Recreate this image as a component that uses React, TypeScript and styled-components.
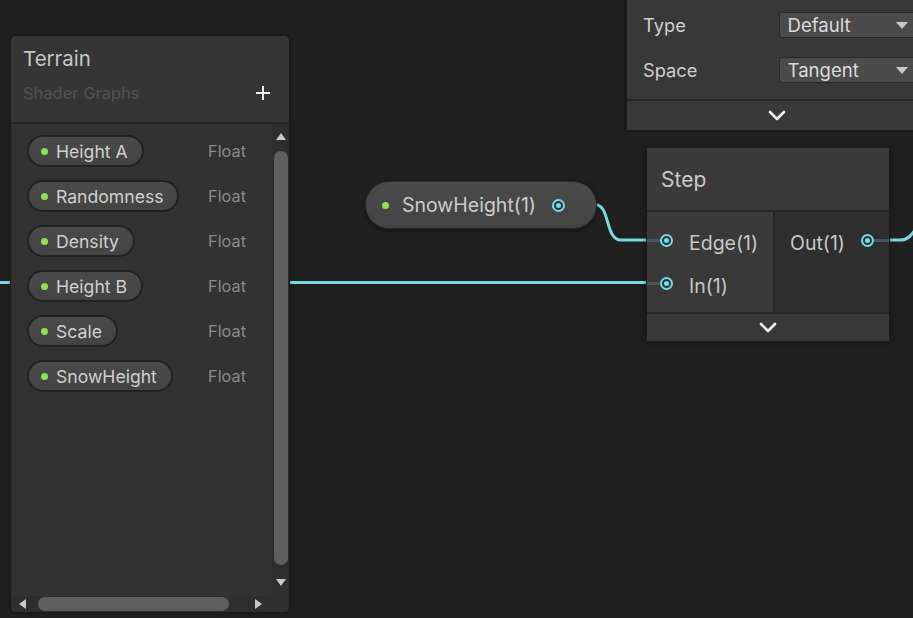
import { FC } from "react";
import styled, { createGlobalStyle } from "styled-components";

const CYAN = "#79d9e2";

const GlobalStyle = createGlobalStyle`
  html, body {
    margin: 0;
    padding: 0;
    background: #202020;
  }
  body {
    font-family: Inter, "Noto Sans", sans-serif;
    -webkit-font-smoothing: antialiased;
  }
`;

const properties = [
  "Height A",
  "Randomness",
  "Density",
  "Height B",
  "Scale",
  "SnowHeight",
];

const App: FC = () => {
  return (
    <>
      <GlobalStyle />
      <Canvas>
        <Edges />
        <NormalNode />
        <PropertyNode />
        <StepNode />
        <Blackboard />
      </Canvas>
    </>
  );
};

const Canvas = styled.div`
  position: relative;
  width: 913px;
  height: 618px;
  overflow: hidden;
  background: #202020;
`;

const Edges: FC = () => {
  return (
    <EdgeLayer width={913} height={618} viewBox="0 0 913 618">
      <path d="M0 282.5 L647 282.5" stroke={CYAN} strokeWidth={3} fill="none" />
      <path
        d="M596 205 C610 205, 605 240, 621 240 L647 240"
        stroke={CYAN}
        strokeWidth={3}
        fill="none"
      />
      <path
        d="M889 240 L900 240 C908 240, 911 236, 918 226"
        stroke={CYAN}
        strokeWidth={3}
        fill="none"
      />
    </EdgeLayer>
  );
};

const EdgeLayer = styled.svg`
  position: absolute;
  left: 0;
  top: 0;
  pointer-events: none;
`;

/* ---------- blackboard ---------- */

const Blackboard: FC = () => {
  return (
    <BlackboardWindow>
      <BlackboardHeader>
        <BlackboardTitle>Terrain</BlackboardTitle>
        <SubtitleRow>
          <BlackboardSubtitle>Shader Graphs</BlackboardSubtitle>
          <svg width="16" height="16" viewBox="0 0 16 16">
            <path d="M8 1 V15 M1 8 H15" stroke="#ececec" strokeWidth="2" />
          </svg>
        </SubtitleRow>
      </BlackboardHeader>
      <BlackboardBody>
        <PropertyList>
          {properties.map((name) => (
            <PropertyRow key={name}>
              <PropertyPill>
                <Dot />
                {name}
              </PropertyPill>
              <PropertyType>Float</PropertyType>
            </PropertyRow>
          ))}
        </PropertyList>
        <VScroll>
          <Arrow dir="up" />
          <VThumb />
          <Arrow dir="down" />
        </VScroll>
        <HScroll>
          <Arrow dir="left" />
          <HThumb />
          <Arrow dir="right" />
        </HScroll>
        <Corner />
      </BlackboardBody>
    </BlackboardWindow>
  );
};

const BlackboardWindow = styled.div`
  position: absolute;
  left: 10px;
  top: 35px;
  width: 280px;
  height: 578px;
  display: flex;
  flex-direction: column;
  box-sizing: border-box;
  border: 1px solid #1b1b1b;
  border-radius: 6px;
  background: #323232;
  overflow: hidden;
  box-shadow: 0 0 3px rgba(0, 0, 0, 0.4);
`;

const BlackboardHeader = styled.div`
  height: 88px;
  box-sizing: border-box;
  padding: 10px 14px 0 12px;
  background: #353535;
  border-bottom: 2px solid #262626;
`;

const BlackboardTitle = styled.div`
  font-size: 20.5px;
  color: #c6c6c6;
  line-height: 26px;
`;

const SubtitleRow = styled.div`
  display: flex;
  align-items: center;
  justify-content: space-between;
  margin-top: 11px;
  svg {
    margin-right: 4px;
  }
`;

const BlackboardSubtitle = styled.div`
  font-size: 16.5px;
  line-height: 20px;
  color: #525252;
`;

const BlackboardBody = styled.div`
  flex: 1;
  display: grid;
  grid-template-columns: 1fr 17px;
  grid-template-rows: 1fr 16px;
  min-height: 0;
`;

const PropertyList = styled.div`
  display: flex;
  flex-direction: column;
  gap: 13px;
  padding: 11px 26px 0 16px;
  background: #323232;
`;

const PropertyRow = styled.div`
  display: flex;
  align-items: center;
  justify-content: space-between;
  height: 32px;
`;

const PropertyPill = styled.div`
  display: flex;
  align-items: center;
  gap: 8px;
  height: 32px;
  box-sizing: border-box;
  padding: 0 14px 0 12px;
  border: 2px solid #222222;
  border-radius: 16px;
  background: linear-gradient(#4a4a4a, #434343);
  color: #d0d0d0;
  font-size: 17.6px;
  white-space: nowrap;
`;

const Dot = styled.span`
  width: 7px;
  height: 7px;
  border-radius: 50%;
  background: #8ee055;
  flex: none;
`;

const PropertyType = styled.div`
  font-size: 16.3px;
  color: #8a8a8a;
`;

const VScroll = styled.div`
  display: flex;
  flex-direction: column;
  align-items: center;
  padding: 9px 0 10px;
  background: #2e2e2e;
`;

const VThumb = styled.div`
  flex: 1;
  width: 14px;
  margin: 11px 0 14px;
  border-radius: 7px;
  background: #5e5e5e;
`;

const HScroll = styled.div`
  display: flex;
  align-items: center;
  padding: 0 10px 0 8px;
  gap: 12px;
  background: #2e2e2e;
`;

const HThumb = styled.div`
  width: 191px;
  height: 14px;
  border-radius: 7px;
  background: #5e5e5e;
  margin-right: auto;
`;

const Corner = styled.div`
  background: #2e2e2e;
`;

const arrowShape = {
  up: "M0 7 L5 0 L10 7 Z",
  down: "M0 0 L10 0 L5 7 Z",
  left: "M7 0 L7 10 L0 5 Z",
  right: "M0 0 L0 10 L7 5 Z",
};

const Arrow: FC<{ dir: keyof typeof arrowShape }> = ({ dir }) => {
  const vertical = dir === "up" || dir === "down";
  return (
    <ArrowIcon
      width={vertical ? 10 : 7}
      height={vertical ? 7 : 10}
      viewBox={vertical ? "0 0 10 7" : "0 0 7 10"}
    >
      <path d={arrowShape[dir]} fill="#c9c9c9" />
    </ArrowIcon>
  );
};

const ArrowIcon = styled.svg`
  flex: none;
`;

/* ---------- graph nodes ---------- */

const Port: FC = () => (
  <PortRing>
    <PortCore />
  </PortRing>
);

const PortRing = styled.span`
  width: 13px;
  height: 13px;
  box-sizing: border-box;
  border: 2px solid ${CYAN};
  border-radius: 50%;
  background: #24383a;
  display: flex;
  align-items: center;
  justify-content: center;
  flex: none;
`;

const PortCore = styled.span`
  width: 5px;
  height: 5px;
  border-radius: 50%;
  background: ${CYAN};
`;

const Stub = styled.span<{ $w: number }>`
  width: ${(p) => p.$w}px;
  height: 3px;
  background: #45595b;
  flex: none;
`;

const Chevron: FC = () => (
  <svg width="18" height="11" viewBox="0 0 18 11">
    <path
      d="M2 2 L9 9 L16 2"
      stroke="#f2f2f2"
      strokeWidth="2.6"
      fill="none"
      strokeLinecap="round"
      strokeLinejoin="round"
    />
  </svg>
);

const CollapseBar = styled.div<{ $h: number }>`
  height: ${(p) => p.$h}px;
  display: flex;
  align-items: center;
  justify-content: center;
  background: #393939;
  border-top: 2px solid #262626;
`;

/* normal vector style node, cut at the top right */

const NormalNode: FC = () => {
  return (
    <NormalFrame>
      <NormalBody>
        <FieldRow>
          <FieldLabel>Type</FieldLabel>
          <Dropdown>
            Default
            <DropTriangle />
          </Dropdown>
        </FieldRow>
        <FieldRow>
          <FieldLabel>Space</FieldLabel>
          <Dropdown>
            Tangent
            <DropTriangle />
          </Dropdown>
        </FieldRow>
      </NormalBody>
      <CollapseBar $h={29}>
        <Chevron />
      </CollapseBar>
    </NormalFrame>
  );
};

const NormalFrame = styled.div`
  position: absolute;
  left: 626px;
  top: -20px;
  width: 300px;
  border: 1px solid #1c1c1c;
  background: #383838;
  box-shadow: 0 0 3px rgba(0, 0, 0, 0.5);
`;

const NormalBody = styled.div`
  padding: 21px 0 7px 16px;
  background: #383838;
`;

const FieldRow = styled.div`
  display: flex;
  align-items: center;
  height: 45px;
`;

const FieldLabel = styled.div`
  width: 137px;
  font-size: 18.3px;
  color: #cfcfcf;
`;

const Dropdown = styled.div`
  position: relative;
  width: 150px;
  height: 26px;
  box-sizing: border-box;
  padding-left: 8px;
  display: flex;
  align-items: center;
  border: 1px solid #2a2a2a;
  border-radius: 3px;
  background: #4b4b4b;
  color: #dadada;
  font-size: 18.6px;
`;

const DropTriangle = styled.span`
  position: absolute;
  left: 116px;
  top: 9px;
  width: 0;
  height: 0;
  border-left: 6px solid transparent;
  border-right: 6px solid transparent;
  border-top: 7px solid #c8c8c8;
`;

/* property node */

const PropertyNode: FC = () => (
  <PropertyNodeFrame>
    <Dot />
    <NodePropertyLabel>SnowHeight(1)</NodePropertyLabel>
    <Port />
  </PropertyNodeFrame>
);

const PropertyNodeFrame = styled.div`
  position: absolute;
  left: 365px;
  top: 181px;
  width: 232px;
  height: 48px;
  box-sizing: border-box;
  display: flex;
  align-items: center;
  padding-left: 16px;
  border: 1px solid #2a2a2a;
  border-radius: 24px;
  background: linear-gradient(#4a4a4a, #444444);
  box-shadow: 0 1px 4px rgba(0, 0, 0, 0.5);
`;

const NodePropertyLabel = styled.div`
  margin: 0 16px 0 13px;
  font-size: 19.5px;
  color: #cccccc;
`;

/* step node */

const StepNode: FC = () => (
  <StepFrame>
    <StepTitle>Step</StepTitle>
    <StepBody>
      <Inputs>
        <SlotRow>
          <Stub $w={13} />
          <Port />
          <SlotLabel $gap={16}>Edge(1)</SlotLabel>
        </SlotRow>
        <SlotRow>
          <Stub $w={13} />
          <Port />
          <SlotLabel $gap={16}>In(1)</SlotLabel>
        </SlotRow>
      </Inputs>
      <Outputs>
        <SlotRow>
          <SlotLabel $gap={15}>Out(1)</SlotLabel>
          <OutSpacer />
          <Port />
          <Stub $w={15} />
        </SlotRow>
      </Outputs>
    </StepBody>
    <CollapseBar $h={27}>
      <Chevron />
    </CollapseBar>
  </StepFrame>
);

const StepFrame = styled.div`
  position: absolute;
  left: 646px;
  top: 147px;
  width: 242px;
  border: 1px solid #1c1c1c;
  background: #393939;
  box-shadow: 0 0 4px rgba(0, 0, 0, 0.5);
`;

const StepTitle = styled.div`
  height: 62px;
  display: flex;
  align-items: center;
  padding-left: 14px;
  font-size: 21px;
  color: #c9c9c9;
  background: #3a3a3a;
  border-bottom: 2px solid #262626;
`;

const StepBody = styled.div`
  display: grid;
  grid-template-columns: 126px 114px;
  column-gap: 2px;
  height: 100px;
  background: #262626;
`;

const Inputs = styled.div`
  padding-top: 7px;
  background: #393939;
`;

const Outputs = styled.div`
  padding-top: 7px;
  background: #2e2e2e;
`;

const SlotRow = styled.div`
  display: flex;
  align-items: center;
  height: 43px;
`;

const SlotLabel = styled.span<{ $gap: number }>`
  margin-left: ${(p) => p.$gap}px;
  padding-top: 4px;
  font-size: 19.5px;
  color: #c7c7c7;
`;

const OutSpacer = styled.span`
  flex: 1;
`;

export default App;
